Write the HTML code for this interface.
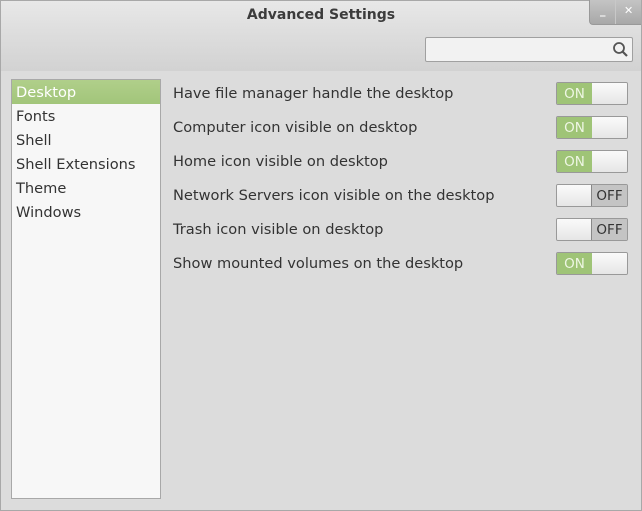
<!DOCTYPE html><html><head><style>
body{margin:0;width:642px;height:511px;overflow:hidden;font-family:"DejaVu Sans","Liberation Sans",sans-serif;}
.win{position:absolute;left:0;top:0;width:640px;height:509px;border:1px solid #a8a8a8;background:#dcdcdc;}
.title{position:absolute;left:0;top:0;width:640px;height:30px;background:linear-gradient(#e8e8e8,#dedede);text-align:center;font-weight:bold;font-size:14px;color:#3c3c3c;line-height:28px;}
.tool{position:absolute;left:0;top:30px;width:640px;height:40px;background:linear-gradient(#dedede,#d2d2d2);}
.btns{position:absolute;left:588px;top:-1px;width:51px;height:24px;background:linear-gradient(#c4c4c4,#a8a8a8);border-radius:0 0 0 4px;border-left:1px solid #999;border-bottom:1px solid #999;}
.btns span{position:absolute;color:#fff;font-size:11px;font-weight:bold;top:4px}
.search{position:absolute;left:424px;top:36px;width:206px;height:23px;border:1px solid #a0a0a0;border-radius:2px;background:#f2f2f2;}
.side{position:absolute;left:10px;top:78px;width:148px;height:418px;border:1px solid #a8a8a8;background:#f7f7f7;}
.side div{height:24px;line-height:26px;padding-left:4px;font-size:14.6px;color:#333;}
.side .sel{background:linear-gradient(#b0cf8a,#a2c57a);color:#fff;}
.row{position:absolute;left:172px;font-size:14.6px;color:#333;}
.tg{position:absolute;left:555px;width:70px;height:21px;border:1px solid #999;border-radius:2px;overflow:hidden;}
.tg .on{position:absolute;left:0;top:0;width:35px;height:21px;background:#9fc477;color:#eef6e4;font-size:13.5px;line-height:22px;text-align:center;border-right:1px solid #7fa35a;}
.tg .off{position:absolute;right:0;top:0;width:35px;height:21px;background:#c4c4c4;color:#333;font-size:13.5px;line-height:22px;text-align:center;border-left:1px solid #888;}
.tg .kn{position:absolute;top:0;width:35px;height:21px;background:linear-gradient(#fafafa,#e6e6e6);}
</style></head><body><div class="win">
<div class="title">Advanced Settings</div>
<div class="tool"></div>
<div class="btns"><span style="left:10px">_</span><div style="position:absolute;left:25px;top:0;width:1px;height:24px;background:#c8c8c8"></div><span style="left:34px">✕</span></div>
<div class="search"><svg style="position:absolute;right:3px;top:3px" width="17" height="17"><circle cx="7" cy="7" r="5" stroke="#555" stroke-width="1.8" fill="none"/><line x1="10.5" y1="10.5" x2="15" y2="15" stroke="#555" stroke-width="2.2"/></svg></div>
<div class="side"><div class="sel">Desktop</div><div>Fonts</div><div>Shell</div><div>Shell Extensions</div><div>Theme</div><div>Windows</div></div>
<div class="row" style="top:84px">Have file manager handle the desktop</div>
<div class="row" style="top:118px">Computer icon visible on desktop</div>
<div class="row" style="top:152px">Home icon visible on desktop</div>
<div class="row" style="top:186px">Network Servers icon visible on the desktop</div>
<div class="row" style="top:220px">Trash icon visible on desktop</div>
<div class="row" style="top:254px">Show mounted volumes on the desktop</div>
<div class="tg" style="top:81px"><div class="on">ON</div><div class="kn" style="right:0"></div></div>
<div class="tg" style="top:115px"><div class="on">ON</div><div class="kn" style="right:0"></div></div>
<div class="tg" style="top:149px"><div class="on">ON</div><div class="kn" style="right:0"></div></div>
<div class="tg" style="top:183px"><div class="kn" style="left:0"></div><div class="off">OFF</div></div>
<div class="tg" style="top:217px"><div class="kn" style="left:0"></div><div class="off">OFF</div></div>
<div class="tg" style="top:251px"><div class="on">ON</div><div class="kn" style="right:0"></div></div>
</div></body></html>
